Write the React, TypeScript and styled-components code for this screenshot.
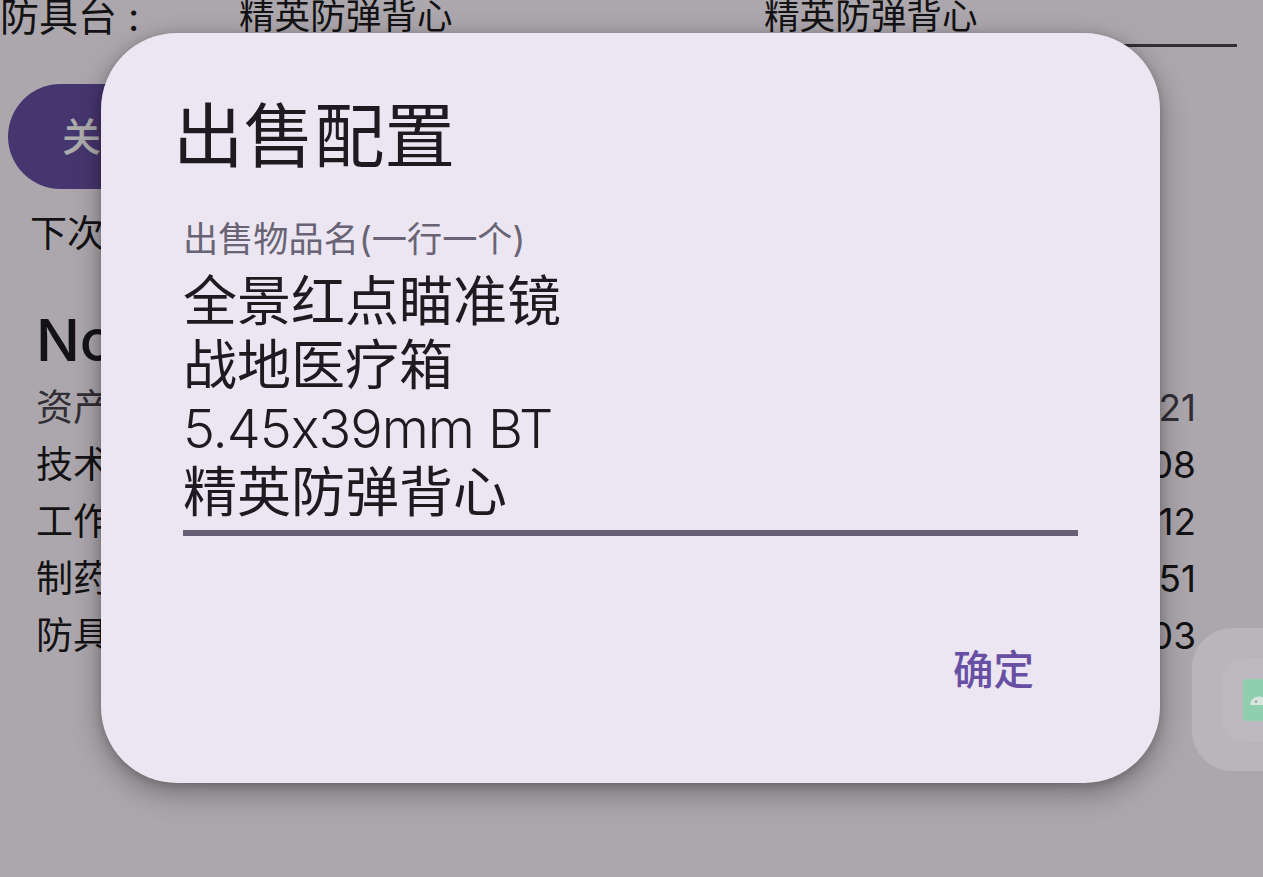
import styled, { createGlobalStyle } from 'styled-components';

const FONT = `Inter, "Noto Sans CJK SC", sans-serif`;

const GlobalStyle = createGlobalStyle`
  html, body {
    margin: 0;
    padding: 0;
    background: #fef7ff;
  }
`;

const Page = styled.div`
  position: relative;
  width: 1263px;
  height: 877px;
  overflow: hidden;
  background: #fef7ff;
  color: #1d1b20;
  font-family: ${FONT};
  font-feature-settings: 'calt' 0;
`;

const TopRow = styled.div`
  display: flex;
  align-items: flex-end;
  height: 45px;
  padding-right: 26px;
  font-size: 35.6px;
  line-height: 48px;
`;

const TopLabel = styled.span`
  flex: 0 0 239px;
  padding-bottom: 4px;
  font-size: 39px;
  white-space: nowrap;
`;

const TopValue = styled.span`
  flex: 0 0 525px;
  padding-bottom: 4px;
  white-space: nowrap;
`;

const TopField = styled.div`
  flex: 1;
  height: 48px;
  border-bottom: 3px solid #49454f;
  box-sizing: border-box;
  margin-bottom: -2px;
  white-space: nowrap;
  line-height: 36px;
`;

const Pill = styled.div`
  margin: 39px 0 0 8px;
  width: 300px;
  height: 105px;
  border-radius: 53px;
  background: #6750a4;
  color: #fff;
  font-size: 39px;
  font-weight: 500;
  line-height: 105px;
  padding-left: 54px;
  box-sizing: border-box;
`;

const NextLine = styled.div`
  margin: 20px 0 0 30px;
  font-size: 37px;
  line-height: 50px;
`;

const Section = styled.section`
  margin: 42px 67px 0 36px;
`;

const SectionTitle = styled.div`
  font-size: 58px;
  font-weight: 500;
  line-height: 78px;
`;

const Row = styled.div`
  display: flex;
  justify-content: space-between;
  font-size: 37px;
  line-height: 57px;
  color: ${({ $muted }: { $muted?: boolean }) => ($muted ? '#49454f' : '#1d1b20')};
`;

const Scrim = styled.div`
  position: absolute;
  inset: 0;
  background: rgba(0, 0, 0, 0.32);
`;

const Tile = styled.div`
  position: absolute;
  left: 1192px;
  top: 628px;
  width: 140px;
  height: 143px;
  border-radius: 40px;
  background: rgba(255, 255, 255, 0.16);
  display: flex;
  align-items: center;
  padding-left: 30px;
  box-sizing: border-box;
`;

const TileInner = styled.div`
  width: 110px;
  height: 84px;
  border-radius: 22px;
  background: rgba(255, 255, 255, 0.05);
  display: flex;
  align-items: center;
  padding-left: 21px;
  box-sizing: border-box;
`;

const AppIcon = styled.svg`
  width: 42px;
  height: 42px;
  flex: none;
  border-radius: 3px;
  background: #8fcfad;
`;

const Dialog = styled.div`
  position: absolute;
  left: 101px;
  top: 33px;
  width: 1059px;
  height: 750px;
  box-sizing: border-box;
  padding: 63px 82px 0 82px;
  border-radius: 76px;
  background: #ebe6f1;
  box-shadow: 0 10px 30px rgba(0, 0, 0, 0.33), 0 2px 10px rgba(0, 0, 0, 0.18);
  display: flex;
  flex-direction: column;
`;

const Title = styled.h2`
  margin: 0 0 0 -10px;
  font-size: 70.5px;
  font-weight: 400;
  line-height: 82px;
  color: #1d1b20;
  letter-spacing: 0;
`;

const Field = styled.div`
  margin-top: 38px;
  border-bottom: 6px solid #665f76;
  padding-bottom: 6px;
`;

const FieldLabel = styled.div`
  font-size: 35.2px;
  line-height: 46px;
  margin-bottom: 8px;
  color: #696475;
`;

const FieldLine = styled.div<{ $latin?: boolean }>`
  font-size: 54px;
  line-height: 63.5px;
  color: #1d1b20;
  white-space: nowrap;
  font-weight: ${({ $latin }) => ($latin ? 350 : 400)};
  letter-spacing: ${({ $latin }) => ($latin ? '-1px' : '0')};
`;

const Actions = styled.div`
  display: flex;
  justify-content: flex-end;
  margin-top: 108px;
`;

const ConfirmButton = styled.button`
  border: 0;
  padding: 0;
  margin-right: 44px;
  background: none;
  color: #6750a4;
  font-family: ${FONT};
  font-size: 40.5px;
  font-weight: 500;
  line-height: 54px;
`;

const rows = [
  { label: '资产', value: '21', muted: true },
  { label: '技术', value: '08' },
  { label: '工作', value: '12' },
  { label: '制药', value: '51' },
  { label: '防具', value: '03' },
];

const items = ['全景红点瞄准镜', '战地医疗箱', '5.45x39mm BT', '精英防弹背心'];

export default function App() {
  return (
    <Page>
      <GlobalStyle />
      <TopRow>
        <TopLabel>防具台 :</TopLabel>
        <TopValue>精英防弹背心</TopValue>
        <TopField>精英防弹背心</TopField>
      </TopRow>
      <Pill>关闭</Pill>
      <NextLine>下次</NextLine>
      <Section>
        <SectionTitle>No</SectionTitle>
        {rows.map((row) => (
          <Row key={row.label} $muted={row.muted}>
            <span>{row.label}</span>
            <span>{row.value}</span>
          </Row>
        ))}
      </Section>
      <Scrim />
      <Tile>
        <TileInner>
          <AppIcon viewBox="0 0 42 42">
            <path d="M7 26c.6-5 4.500-8.500 9-8.500s8.400 3.500 9 8.500z" fill="#d9e6de" />
            <circle cx="13" cy="22.500" r="1.200" fill="#8f9f95" />
          </AppIcon>
        </TileInner>
      </Tile>
      <Dialog>
        <Title>出售配置</Title>
        <Field>
          <FieldLabel>出售物品名(一行一个)</FieldLabel>
          {items.map((item) => (
            <FieldLine key={item} $latin={item.startsWith('5')}>
              {item}
            </FieldLine>
          ))}
        </Field>
        <Actions>
          <ConfirmButton>确定</ConfirmButton>
        </Actions>
      </Dialog>
    </Page>
  );
}
